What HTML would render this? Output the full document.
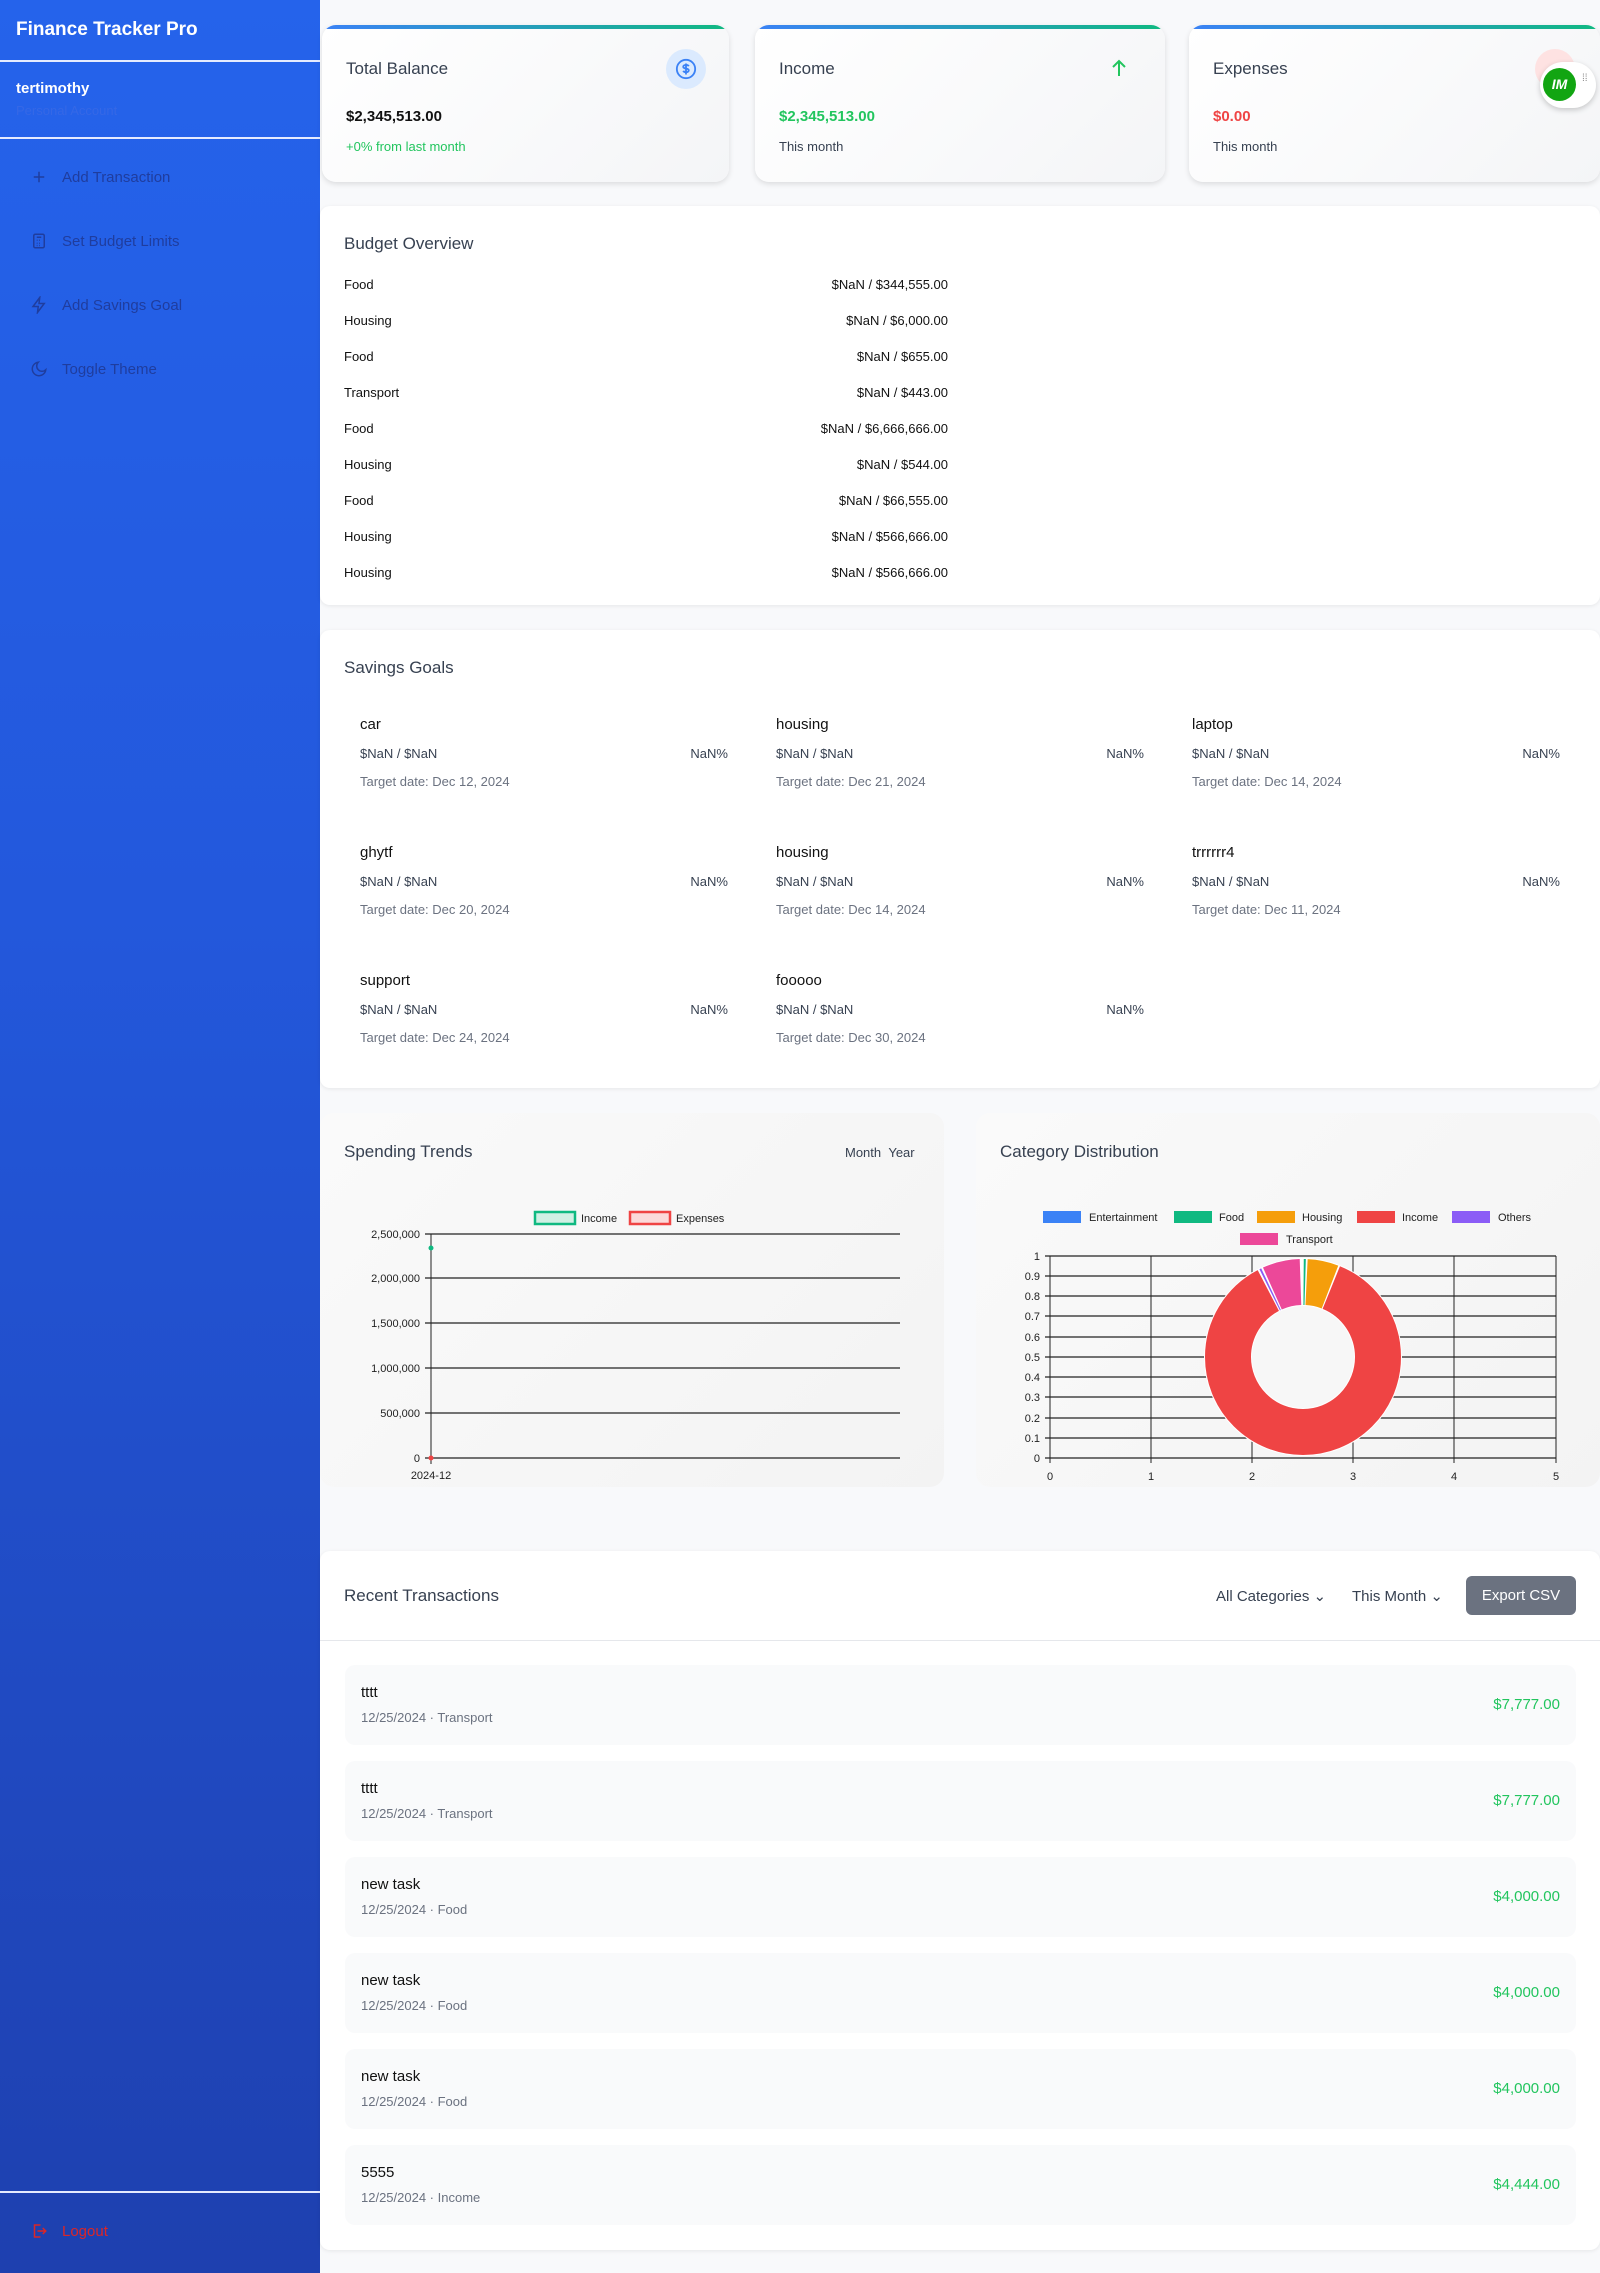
<!DOCTYPE html>
<html><head><meta charset="utf-8"><style>
*{box-sizing:border-box;margin:0;padding:0}
body{width:1600px;height:2273px;background:#f8f9fb;font-family:"Liberation Sans",sans-serif;position:relative;overflow:hidden;color:#111}
.a{position:absolute;white-space:nowrap}
.sb{position:absolute;left:0;top:0;width:320px;height:2273px;background:linear-gradient(180deg,#2563eb 0%,#2358dc 40%,#1e40af 100%)}
.hr{position:absolute;left:0;width:320px;height:2px;background:#e5ebff}
.nav{position:absolute;left:30px;font-size:15px;color:#1f3d9e;display:flex;align-items:center;gap:14px}
.nav svg{width:18px;height:18px}
.card{position:absolute;top:25px;height:157px;border-radius:14px;background:linear-gradient(135deg,#fff,#f4f5f7);box-shadow:0 2px 6px rgba(0,0,0,.12);overflow:hidden}
.card:before{content:"";position:absolute;left:0;top:0;right:0;height:4px;background:linear-gradient(90deg,#3b82f6,#10b981)}
.ct{position:absolute;left:24px;top:34px;font-size:17px;color:#374151}
.cv{position:absolute;left:24px;top:83px;font-size:15px;font-weight:bold}
.cs{position:absolute;left:24px;top:114px;font-size:13px;color:#374151}
.panel{position:absolute;left:320px;width:1280px;background:#fff;border-radius:10px;box-shadow:0 1px 4px rgba(0,0,0,.08)}
.pt{position:absolute;font-size:17px;color:#374151}
.br{position:absolute;left:24px;width:604px;font-size:13px;color:#111}
.br span{position:absolute;right:0}
.g{position:absolute;width:368px}
.g .n{position:absolute;left:0;top:0;font-size:15px;color:#111}
.g .m{position:absolute;left:0;top:30px;font-size:13px;color:#374151}
.g .p{position:absolute;right:0;top:30px;font-size:13px;color:#374151}
.g .d{position:absolute;left:0;top:58px;font-size:13px;color:#6b7280}
.tx{position:absolute;left:345px;width:1231px;height:80px;background:#f9fafb;border-radius:10px}
.tx .n{position:absolute;left:16px;top:19px;font-size:15px;color:#111}
.tx .d{position:absolute;left:16px;top:45px;font-size:13px;color:#6b7280}
.tx .v{position:absolute;right:16px;top:31px;font-size:15px;color:#22c55e}
</style></head><body>
<div class="sb"></div>
<div class="a" style="left:16px;top:19px;font-size:19px;font-weight:bold;color:#fff">Finance Tracker Pro</div>
<div class="hr" style="top:60px"></div>
<div class="a" style="left:16px;top:80px;font-size:15px;font-weight:bold;color:#fff">tertimothy</div>
<div class="a" style="left:16px;top:103px;font-size:13px;color:#3568e6">Personal Account</div>
<div class="hr" style="top:137px"></div>
<div class="nav" style="top:168px"><svg viewBox="0 0 24 24" fill="none" stroke="#1f3d9e" stroke-width="2"><path d="M12 5v14M5 12h14"/></svg>Add Transaction</div>
<div class="nav" style="top:232px"><svg viewBox="0 0 24 24" fill="none" stroke="#1f3d9e" stroke-width="2"><rect x="5" y="3" width="14" height="18" rx="2"/><path d="M9 7h6M9 11h1M12 11h1M15 11h0M9 15h1M12 15h1M9 18h1M12 18h1"/></svg>Set Budget Limits</div>
<div class="nav" style="top:296px"><svg viewBox="0 0 24 24" fill="none" stroke="#1f3d9e" stroke-width="2"><path d="M13 2L4 14h7l-1 8 9-12h-7z"/></svg>Add Savings Goal</div>
<div class="nav" style="top:360px"><svg viewBox="0 0 24 24" fill="none" stroke="#1f3d9e" stroke-width="2"><path d="M21 13A9 9 0 1 1 11 3a7 7 0 0 0 10 10z"/></svg>Toggle Theme</div>
<div class="hr" style="top:2191px"></div>
<div class="nav" style="top:2222px;color:#dc2626"><svg viewBox="0 0 24 24" fill="none" stroke="#dc2626" stroke-width="2"><path d="M14 4H6v16h8M10 12h11M17 8l4 4-4 4"/></svg>Logout</div>

<div class="card" style="left:322px;width:407px"><div class="ct">Total Balance</div><div class="cv">$2,345,513.00</div><div class="cs" style="color:#22c55e">+0% from last month</div>
<div style="position:absolute;left:344px;top:24px;width:40px;height:40px;border-radius:50%;background:#dbeafe"><svg viewBox="0 0 24 24" width="22" height="22" style="margin:9px" fill="none" stroke="#3b82f6" stroke-width="2"><circle cx="12" cy="12" r="10"/><path d="M15 9a3 2.5 0 0 0-3-1.5c-2 0-3 1-3 2s1 1.7 3 2 3 1 3 2-1 2-3 2a3 2.5 0 0 1-3-1.5M12 6v12"/></svg></div></div>
<div class="card" style="left:755px;width:410px"><div class="ct">Income</div><div class="cv" style="color:#22c55e">$2,345,513.00</div><div class="cs">This month</div>
<svg style="position:absolute;left:355px;top:33px" width="18" height="20" viewBox="0 0 18 20" fill="none" stroke="#22c55e" stroke-width="2"><path d="M9 18V3M3 9l6-6 6 6"/></svg></div>
<div class="card" style="left:1189px;width:411px"><div class="ct">Expenses</div><div class="cv" style="color:#ef4444">$0.00</div><div class="cs">This month</div>
<div style="position:absolute;left:346px;top:24px;width:40px;height:40px;border-radius:50%;background:#fee2e2"></div></div>
<div style="position:absolute;left:1540px;top:62px;width:56px;height:46px;border-radius:23px;background:#fff;box-shadow:0 2px 6px rgba(0,0,0,.2)"><div style="position:absolute;left:3px;top:6px;width:33px;height:33px;border-radius:50%;background:#12a512;color:#fff;font-weight:bold;font-size:14px;font-style:italic;text-align:center;line-height:33px">IM</div><div style="position:absolute;left:42px;top:14px;font-size:10px;color:#888;line-height:6px">⁞⁞</div></div>

<div class="panel" style="top:206px;height:399px">
<div class="pt" style="left:24px;top:28px">Budget Overview</div>
<div class="br" style="top:71px">Food<span>$NaN / $344,555.00</span></div>
<div class="br" style="top:107px">Housing<span>$NaN / $6,000.00</span></div>
<div class="br" style="top:143px">Food<span>$NaN / $655.00</span></div>
<div class="br" style="top:179px">Transport<span>$NaN / $443.00</span></div>
<div class="br" style="top:215px">Food<span>$NaN / $6,666,666.00</span></div>
<div class="br" style="top:251px">Housing<span>$NaN / $544.00</span></div>
<div class="br" style="top:287px">Food<span>$NaN / $66,555.00</span></div>
<div class="br" style="top:323px">Housing<span>$NaN / $566,666.00</span></div>
<div class="br" style="top:359px">Housing<span>$NaN / $566,666.00</span></div>
</div>

<div class="panel" style="top:630px;height:458px">
<div class="pt" style="left:24px;top:28px">Savings Goals</div>
<div class="g" style="left:40px;top:86px"><div class="n">car</div><div class="m">$NaN / $NaN</div><div class="p">NaN%</div><div class="d">Target date: Dec 12, 2024</div></div>
<div class="g" style="left:456px;top:86px"><div class="n">housing</div><div class="m">$NaN / $NaN</div><div class="p">NaN%</div><div class="d">Target date: Dec 21, 2024</div></div>
<div class="g" style="left:872px;top:86px"><div class="n">laptop</div><div class="m">$NaN / $NaN</div><div class="p">NaN%</div><div class="d">Target date: Dec 14, 2024</div></div>
<div class="g" style="left:40px;top:214px"><div class="n">ghytf</div><div class="m">$NaN / $NaN</div><div class="p">NaN%</div><div class="d">Target date: Dec 20, 2024</div></div>
<div class="g" style="left:456px;top:214px"><div class="n">housing</div><div class="m">$NaN / $NaN</div><div class="p">NaN%</div><div class="d">Target date: Dec 14, 2024</div></div>
<div class="g" style="left:872px;top:214px"><div class="n">trrrrrr4</div><div class="m">$NaN / $NaN</div><div class="p">NaN%</div><div class="d">Target date: Dec 11, 2024</div></div>
<div class="g" style="left:40px;top:342px"><div class="n">support</div><div class="m">$NaN / $NaN</div><div class="p">NaN%</div><div class="d">Target date: Dec 24, 2024</div></div>
<div class="g" style="left:456px;top:342px"><div class="n">fooooo</div><div class="m">$NaN / $NaN</div><div class="p">NaN%</div><div class="d">Target date: Dec 30, 2024</div></div>
</div>

<div style="position:absolute;left:320px;top:1113px;width:624px;height:374px;border-radius:14px;background:linear-gradient(135deg,#fafafa,#f3f3f3)"></div>
<div style="position:absolute;left:976px;top:1113px;width:624px;height:374px;border-radius:14px;background:linear-gradient(135deg,#fafafa,#f3f3f3)"></div>
<div class="pt" style="left:344px;top:1142px">Spending Trends</div>
<div class="a" style="left:845px;top:1145px;font-size:13px;color:#374151">Month&nbsp;&nbsp;Year</div>
<div class="pt" style="left:1000px;top:1142px">Category Distribution</div>

<svg style="position:absolute;left:0;top:0" width="1600" height="2273" font-family="Liberation Sans,sans-serif" font-size="11">
<g stroke="#222" stroke-width="1.3">
<line x1="425" y1="1234" x2="900" y2="1234"/><line x1="425" y1="1278" x2="900" y2="1278"/><line x1="425" y1="1323" x2="900" y2="1323"/><line x1="425" y1="1368" x2="900" y2="1368"/><line x1="425" y1="1413" x2="900" y2="1413"/><line x1="425" y1="1458" x2="900" y2="1458"/>
<line x1="431" y1="1234" x2="431" y2="1464" stroke-width="1"/>
</g>
<g text-anchor="end" fill="#222"><text x="420" y="1238">2,500,000</text><text x="420" y="1282">2,000,000</text><text x="420" y="1327">1,500,000</text><text x="420" y="1372">1,000,000</text><text x="420" y="1417">500,000</text><text x="420" y="1462">0</text></g>
<text x="431" y="1479" text-anchor="middle" fill="#222">2024-12</text>
<circle cx="431" cy="1248" r="2.5" fill="#10b981"/><circle cx="431" cy="1458" r="2.5" fill="#ef4444"/>
<rect x="535" y="1212" width="40" height="12" fill="#d1f0e4" stroke="#10b981" stroke-width="2.5"/><text x="581" y="1222" fill="#222">Income</text>
<rect x="630" y="1212" width="40" height="12" fill="#fbdada" stroke="#ef4444" stroke-width="2.5"/><text x="676" y="1222" fill="#222">Expenses</text>

<g stroke="#222" stroke-width="1.3">
<line x1="1045" y1="1256" x2="1556" y2="1256"/><line x1="1045" y1="1276" x2="1556" y2="1276"/><line x1="1045" y1="1296" x2="1556" y2="1296"/><line x1="1045" y1="1316" x2="1556" y2="1316"/><line x1="1045" y1="1337" x2="1556" y2="1337"/><line x1="1045" y1="1357" x2="1556" y2="1357"/><line x1="1045" y1="1377" x2="1556" y2="1377"/><line x1="1045" y1="1397" x2="1556" y2="1397"/><line x1="1045" y1="1418" x2="1556" y2="1418"/><line x1="1045" y1="1438" x2="1556" y2="1438"/><line x1="1045" y1="1458" x2="1556" y2="1458"/>
<line x1="1050" y1="1256" x2="1050" y2="1463" stroke-width="1"/><line x1="1151" y1="1256" x2="1151" y2="1463" stroke-width="1"/><line x1="1252" y1="1256" x2="1252" y2="1463" stroke-width="1"/><line x1="1353" y1="1256" x2="1353" y2="1463" stroke-width="1"/><line x1="1454" y1="1256" x2="1454" y2="1463" stroke-width="1"/><line x1="1556" y1="1256" x2="1556" y2="1463" stroke-width="1"/>
</g>
<g text-anchor="end" fill="#222"><text x="1040" y="1260">1</text><text x="1040" y="1280">0.9</text><text x="1040" y="1300">0.8</text><text x="1040" y="1320">0.7</text><text x="1040" y="1341">0.6</text><text x="1040" y="1361">0.5</text><text x="1040" y="1381">0.4</text><text x="1040" y="1401">0.3</text><text x="1040" y="1422">0.2</text><text x="1040" y="1442">0.1</text><text x="1040" y="1462">0</text></g>
<g text-anchor="middle" fill="#222"><text x="1050" y="1480">0</text><text x="1151" y="1480">1</text><text x="1252" y="1480">2</text><text x="1353" y="1480">3</text><text x="1454" y="1480">4</text><text x="1556" y="1480">5</text></g>
<rect x="1043" y="1211" width="38" height="12" fill="#3b82f6"/><text x="1089" y="1221" fill="#222">Entertainment</text>
<rect x="1174" y="1211" width="38" height="12" fill="#10b981"/><text x="1219" y="1221" fill="#222">Food</text>
<rect x="1257" y="1211" width="38" height="12" fill="#f59e0b"/><text x="1302" y="1221" fill="#222">Housing</text>
<rect x="1357" y="1211" width="38" height="12" fill="#ef4444"/><text x="1402" y="1221" fill="#222">Income</text>
<rect x="1452" y="1211" width="38" height="12" fill="#8b5cf6"/><text x="1498" y="1221" fill="#222">Others</text>
<rect x="1240" y="1233" width="38" height="12" fill="#ec4899"/><text x="1286" y="1243" fill="#222">Transport</text>
<circle cx="1303" cy="1357" r="99" fill="#fff"/>
<circle cx="1303" cy="1357" r="51" fill="#f7f7f7"/>
<g transform="rotate(-90 1303 1357)" fill="none" stroke-width="46">
<circle cx="1303" cy="1357" r="75" stroke="#10b981" stroke-dasharray="1.6 470" stroke-dashoffset="-0.6"/>
<circle cx="1303" cy="1357" r="75" stroke="#f59e0b" stroke-dasharray="24 470" stroke-dashoffset="-3.6"/>
<circle cx="1303" cy="1357" r="75" stroke="#ef4444" stroke-dasharray="406 470" stroke-dashoffset="-29"/>
<circle cx="1303" cy="1357" r="75" stroke="#8b5cf6" stroke-dasharray="1.5 470" stroke-dashoffset="-436.5"/>
<circle cx="1303" cy="1357" r="75" stroke="#ec4899" stroke-dasharray="29 470" stroke-dashoffset="-439.5"/>
</g>
</svg>

<div class="panel" style="top:1551px;height:699px">
<div class="pt" style="left:24px;top:35px">Recent Transactions</div>
<div class="a" style="left:896px;top:36px;font-size:15px;color:#374151">All Categories ⌄</div>
<div class="a" style="left:1032px;top:36px;font-size:15px;color:#374151">This Month ⌄</div>
<div style="position:absolute;left:1146px;top:25px;width:110px;height:39px;border-radius:6px;background:#6b7280;color:#fff;font-size:15px;text-align:center;line-height:39px">Export CSV</div>
<div style="position:absolute;left:0;top:89px;width:1280px;height:1px;background:#e5e7eb"></div>
</div>
<div class="tx" style="top:1665px"><div class="n">tttt</div><div class="d">12/25/2024 · Transport</div><div class="v">$7,777.00</div></div>
<div class="tx" style="top:1761px"><div class="n">tttt</div><div class="d">12/25/2024 · Transport</div><div class="v">$7,777.00</div></div>
<div class="tx" style="top:1857px"><div class="n">new task</div><div class="d">12/25/2024 · Food</div><div class="v">$4,000.00</div></div>
<div class="tx" style="top:1953px"><div class="n">new task</div><div class="d">12/25/2024 · Food</div><div class="v">$4,000.00</div></div>
<div class="tx" style="top:2049px"><div class="n">new task</div><div class="d">12/25/2024 · Food</div><div class="v">$4,000.00</div></div>
<div class="tx" style="top:2145px"><div class="n">5555</div><div class="d">12/25/2024 · Income</div><div class="v">$4,444.00</div></div>
</body></html>
